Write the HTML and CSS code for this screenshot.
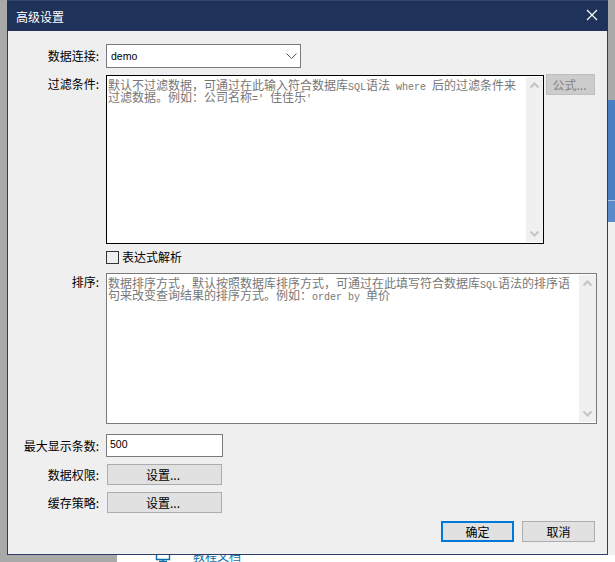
FILE: index.html
```html
<!DOCTYPE html>
<html lang="zh-CN">
<head>
<meta charset="utf-8">
<title>高级设置</title>
<link rel="stylesheet" href="styles.css">
</head>
<body>
<div class="app">
  <div class="app-strip">
    <div class="app-grey"></div>
    <div class="app-blue"></div>
    <div class="app-line"></div>
    <div class="app-blue2"></div>
  </div>
  <div class="app-bottom">
    <svg class="doc-icon" width="16" height="7" viewBox="0 0 16 7"><path d="M1.5 0V4.5H14.5V0M8 4.5V6.5M4 6.5H12" fill="none" stroke="#0b6ea8" stroke-width="1.4"/></svg>
    <span class="doc-link">教程文档</span>
  </div>
</div>
<div class="dialog">
  <header class="titlebar">
    <span class="title">高级设置</span>
    <svg class="close" width="12" height="12" viewBox="0 0 12 12"><path d="M1 1L11 11M11 1L1 11" stroke="#fff" stroke-width="1.2" fill="none"/></svg>
  </header>
  <main class="body">
    <div class="row row-conn">
      <label class="label">数据连接:</label>
      <div class="select">
        <span class="latin">demo</span>
        <svg width="11" height="6" viewBox="0 0 11 6"><path d="M.5.5L5.5 5.5L10.5.5" fill="none" stroke="#555" stroke-width="1"/></svg>
      </div>
    </div>
    <div class="row row-filter">
      <label class="label">过滤条件:</label>
      <div class="memo memo-filter">
        <div class="memo-text">默认不过滤数据&#xFF0C;可通过在此输入符合数据库<span class="mono">SQL</span>语法<span class="mono"> where </span>后的过滤条件来过滤数据。例如&#xFF1A;公司名称<span class="mono">='</span><span class="gap">佳佳乐</span><span class="mono">'</span></div>
        <div class="scroll">
          <svg width="11" height="7" viewBox="0 0 11 7"><path d="M1.5 5.5L5.5 1.5L9.5 5.5" fill="none" stroke="#c4c4c4" stroke-width="2"/></svg>
          <svg width="11" height="7" viewBox="0 0 11 7"><path d="M1.5 1.5L5.5 5.5L9.5 1.5" fill="none" stroke="#c4c4c4" stroke-width="2"/></svg>
        </div>
      </div>
      <button class="btn btn-formula" type="button">公式...</button>
    </div>
    <div class="row row-check">
      <span class="checkbox"></span>
      <span class="check-label">表达式解析</span>
    </div>
    <div class="row row-sort">
      <label class="label">排序:</label>
      <div class="memo memo-sort">
        <div class="memo-text">数据排序方式&#xFF0C;默认按照数据库排序方式&#xFF0C;可通过在此填写符合数据库<span class="mono">SQL</span>语法的排序语句来改变查询结果的排序方式。例如&#xFF1A;<span class="mono">order by </span>单价</div>
        <div class="scroll">
          <svg width="11" height="7" viewBox="0 0 11 7"><path d="M1.5 5.5L5.5 1.5L9.5 5.5" fill="none" stroke="#c4c4c4" stroke-width="2"/></svg>
          <svg width="11" height="7" viewBox="0 0 11 7"><path d="M1.5 1.5L5.5 5.5L9.5 1.5" fill="none" stroke="#c4c4c4" stroke-width="2"/></svg>
        </div>
      </div>
    </div>
    <div class="row row-max">
      <label class="label">最大显示条数:</label>
      <div class="input"><span class="latin">500</span></div>
    </div>
    <div class="row row-perm">
      <label class="label">数据权限:</label>
      <button class="btn btn-set" type="button">设置...</button>
    </div>
    <div class="row row-cache">
      <label class="label">缓存策略:</label>
      <button class="btn btn-set" type="button">设置...</button>
    </div>
    <footer class="footer">
      <button class="btn btn-foot btn-primary" type="button">确定</button>
      <button class="btn btn-foot" type="button">取消</button>
    </footer>
  </main>
</div>
</body>
</html>
```
FILE: styles.css
```css
* { box-sizing: border-box; }
html, body { margin: 0; padding: 0; }
body {
  width: 615px;
  height: 562px;
  overflow: hidden;
  position: relative;
  background: #a9a9a9;
  font-family: "Noto Sans CJK SC", "Liberation Sans", sans-serif;
  font-size: 12px;
  color: #000;
}
.app { height: 562px; display: flex; flex-direction: column; }
.app-strip {
  height: 555px;
  margin-left: 608px;
  display: flex;
  flex-direction: column;
}
.app-grey { height: 100px; background: #a9a9a9; }
.app-blue { height: 100px; background: #4a7fc4; }
.app-line { height: 1px; background: #a9c3e4; }
.app-blue2 { height: 21px; background: #5a8aca; }
.app-strip::after { content: ""; flex: 1; background: #f0f0f0; }
.app-bottom {
  height: 7px;
  margin-left: 117px;
  background: #fff;
  display: flex;
  align-items: flex-start;
  padding-left: 38px;
  overflow: hidden;
  color: #0b6ea8;
  line-height: 12px;
}
.doc-icon { flex: none; }
.doc-link { margin-left: 22px; margin-top: -5px; }
.dialog {
  position: absolute;
  left: 7px;
  top: 0;
  width: 601px;
  height: 555px;
  background: #efefef;
  border: 1px solid #2c3b67;
  border-top: 0;
  display: flex;
  flex-direction: column;
}
.titlebar {
  height: 31px;
  flex: none;
  margin: 0 -1px;
  background: #1f3259;
  border-top: 1px solid #35456c;
  display: flex;
  align-items: center;
  justify-content: space-between;
  padding: 0 11px 0 9px;
  color: #fff;
}
.title { font-size: 12px; }
.close { margin: -2px -1px 0 0; }
.body {
  flex: 1;
  display: flex;
  flex-direction: column;
  padding-top: 13px;
}
.row { display: flex; align-items: center; }
.label {
  flex: none;
  width: 91px;
  margin-right: 7px;
  text-align: right;
  line-height: 14px;
  white-space: nowrap;
}
.latin { font-family: "Liberation Sans", sans-serif; font-size: 10.5px; color: #000; }
.select {
  width: 195px;
  height: 24px;
  background: #fff;
  border: 1px solid #7a7a7a;
  display: flex;
  align-items: center;
  justify-content: space-between;
  padding: 0 3px 0 4px;
}
.row-filter { margin-top: 7px; align-items: flex-start; }
.row-filter .label, .row-sort .label { padding-top: 2px; }
.memo {
  background: #fff;
  display: flex;
  justify-content: space-between;
  border: 1px solid #7a7a7a;
}
.memo-filter { width: 438px; height: 169px; border-color: #000; }
.memo-sort { width: 491px; height: 151px; }
.memo-text {
  flex: 1;
  padding: 3px 0 0 1px;
  line-height: 12px;
  color: #777;
  font-size: 12px;
  min-width: 0;
  word-break: break-all;
}
.mono { font-family: "Liberation Mono", monospace; font-size: 10px; line-height: 0; white-space: pre; }
.gap { margin-left: 6px; }
.scroll {
  flex: none;
  width: 17px;
  margin: 1px 0;
  background: #f0f0f0;
  display: flex;
  flex-direction: column;
  justify-content: space-between;
  align-items: center;
  padding: 5px 0;
}
.btn {
  font: inherit;
  color: #000;
  background: #e1e1e1;
  border: 1px solid #adadad;
  padding: 0;
  line-height: 14px;
  display: flex;
  align-items: center;
  justify-content: center;
}
.btn-formula {
  width: 49px;
  height: 21px;
  margin: -1px 0 0 2px;
  padding-right: 2px;
  background: #ccc;
  border-color: #bfbfbf;
  color: #838383;
}
.row-check { margin-top: 6px; height: 14px; margin-left: 98px; }
.checkbox {
  width: 13px;
  height: 13px;
  background: #efefef;
  border: 1px solid #333;
  flex: none;
}
.check-label { margin-left: 3px; line-height: 14px; }
.row-sort { margin-top: 9px; align-items: flex-start; }
.row-max { margin-top: 10px; }
.input {
  width: 117px;
  height: 23px;
  background: #fff;
  border: 1px solid #7a7a7a;
  display: flex;
  align-items: center;
  padding: 0 3px 3px;
}
.row-perm { margin-top: 7px; }
.row-cache { margin-top: 7px; }
.btn-set { width: 115px; height: 21px; margin-left: 1px; padding-right: 3px; }
.footer {
  display: flex;
  justify-content: flex-end;
  gap: 8px;
  margin-top: 8px;
  padding-right: 12px;
}
.btn-foot { width: 73px; height: 21px; }
.btn-primary { border: 2px solid #0078d7; }
```
